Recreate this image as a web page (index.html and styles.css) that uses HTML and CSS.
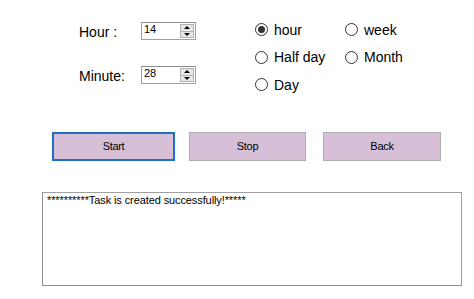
FILE: index.html
```html
<!DOCTYPE html>
<html>
<head>
<meta charset="utf-8">
<link rel="stylesheet" href="styles.css">
</head>
<body>
<div class="form">
  <div class="top">
    <div class="fields">
      <div class="field">
        <span class="label">Hour :</span>
        <div class="spin">
          <span class="value">14</span>
          <div class="updown">
            <span class="btn"><span class="tri up"></span></span>
            <span class="btn"><span class="tri down"></span></span>
          </div>
        </div>
      </div>
      <div class="field">
        <span class="label">Minute:</span>
        <div class="spin">
          <span class="value">28</span>
          <div class="updown">
            <span class="btn"><span class="tri up"></span></span>
            <span class="btn"><span class="tri down"></span></span>
          </div>
        </div>
      </div>
    </div>
    <div class="radios">
      <div class="radio"><span class="circle checked"></span><span>hour</span></div>
      <div class="radio"><span class="circle"></span><span>week</span></div>
      <div class="radio"><span class="circle"></span><span>Half day</span></div>
      <div class="radio"><span class="circle"></span><span>Month</span></div>
      <div class="radio"><span class="circle"></span><span>Day</span></div>
    </div>
  </div>
  <div class="buttons">
    <div class="button start">Start</div>
    <div class="button stop">Stop</div>
    <div class="button back">Back</div>
  </div>
  <div class="log">**********Task is created successfully!*****</div>
</div>
</body>
</html>
```
FILE: styles.css
```css
html, body {
  margin: 0;
  padding: 0;
  background: #ffffff;
}
.form {
  width: 474px;
  height: 299px;
  font-family: "Liberation Sans", Arial, sans-serif;
  color: #000;
  overflow: hidden;
}
.top {
  display: flex;
  padding-top: 14px;
}
.fields {
  display: flex;
  flex-direction: column;
  gap: 26px;
  margin-left: 79px;
  padding-top: 8px;
}
.field {
  display: flex;
  align-items: center;
  height: 18px;
}
.label {
  width: 62px;
  font-size: 14px;
  line-height: 18px;
  position: relative;
  top: 1px;
}
.spin {
  width: 55px;
  height: 18px;
  box-sizing: border-box;
  border: 1px solid #a0a0a0;
  border-top-color: #8c8c8c;
  display: flex;
  justify-content: space-between;
  background: #fff;
}
.value {
  font-size: 11px;
  line-height: 13px;
  padding-left: 2px;
}
.updown {
  width: 14px;
  display: flex;
  flex-direction: column;
  margin: 1px;
  gap: 0;
}
.btn {
  flex: 1;
  background: #e6e6e6;
  border: 1px solid #b4b4b4;
  display: flex;
  align-items: center;
  justify-content: center;
}
.btn + .btn {
  border-top: none;
}
.tri {
  width: 0;
  height: 0;
  border-left: 3px solid transparent;
  border-right: 3px solid transparent;
}
.tri.up {
  border-bottom: 3px solid #000;
}
.tri.down {
  border-top: 3px solid #000;
}
.radios {
  margin-left: 59px;
  margin-top: 2px;
  display: grid;
  grid-template-columns: 90px 90px;
  grid-auto-rows: 27.5px;
}
.radio {
  display: flex;
  align-items: center;
  gap: 6px;
  font-size: 14px;
}
.circle {
  width: 13px;
  height: 13px;
  box-sizing: border-box;
  border: 1px solid #333;
  border-radius: 50%;
  background: #fff;
  display: flex;
  align-items: center;
  justify-content: center;
}
.circle.checked::after {
  content: "";
  width: 7px;
  height: 7px;
  border-radius: 50%;
  background: #333;
}
.buttons {
  display: flex;
  margin-top: 33px;
  margin-left: 52px;
}
.button {
  height: 29px;
  box-sizing: border-box;
  background: #d8bfd8;
  border: 1px solid #adadad;
  font-size: 11px;
  letter-spacing: -0.3px;
  display: flex;
  align-items: center;
  justify-content: center;
}
.start {
  width: 123px;
  border: 2px solid #1a6fc9;
}
.stop {
  width: 117px;
  margin-left: 14px;
}
.back {
  width: 118px;
  margin-left: 17px;
}
.log {
  margin-top: 31px;
  margin-left: 42px;
  width: 420px;
  height: 94px;
  box-sizing: border-box;
  border: 1px solid #a0a0a0;
  border-left-color: #8a8a8a;
  border-bottom-color: #8a8a8a;
  font-size: 11px;
  line-height: 13px;
  padding: 1px 4px;
  letter-spacing: -0.1px;
}
```
